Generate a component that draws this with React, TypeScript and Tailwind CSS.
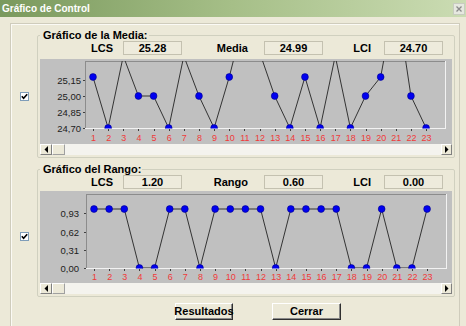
const STEP = 15.14;

const mediaY = [18, 69, -3, 37, 37, 69, -3, 37, 69, 18, -42, -7, 37, 69, 18, 69, -3, 69, 37, 18, -64, 37, 69];
const rangoV = [1, 1, 1, 0, 0, 1, 1, 0, 1, 1, 1, 1, 0, 1, 1, 1, 1, 0, 0, 1, 0, 0, 1];

type Plot = { x1: number; y1: number; x2: number; y2: number };

const Chart = ({
  id,
  height,
  plot,
  x0,
  ys,
  ticks,
  labelRight,
  xLabelY,
}: {
  id: string;
  height: number;
  plot: Plot;
  x0: number;
  ys: number[];
  ticks: { label: string; y: number }[];
  labelRight: number;
  xLabelY: number;
}) => {
  const xs = ys.map((_, i) => x0 + i * STEP);
  const pts = xs.map((x, i) => `${x},${ys[i]}`).join(" ");
  return (
    <svg width={412} height={height} className="block">
      <defs>
        <clipPath id={id}>
          <rect x={plot.x1} y={plot.y1} width={plot.x2 - plot.x1} height={plot.y2 - plot.y1 + 0.5} />
        </clipPath>
      </defs>
      {/* plot frame */}
      <line x1={plot.x1 + 0.5} y1={plot.y1 + 0.5} x2={plot.x2} y2={plot.y1 + 0.5} stroke="#8c8c8c" />
      <line x1={plot.x1 + 0.5} y1={plot.y1} x2={plot.x1 + 0.5} y2={plot.y2} stroke="#8c8c8c" />
      <line x1={plot.x2 + 0.5} y1={plot.y1} x2={plot.x2 + 0.5} y2={plot.y2 + 1} stroke="#f2f2f2" />
      <line x1={plot.x1} y1={plot.y2 + 0.5} x2={plot.x2 + 1} y2={plot.y2 + 0.5} stroke="#f2f2f2" />
      {ticks.map((t) => (
        <g key={t.label}>
          <line x1={plot.x1 - 2} y1={t.y + 0.5} x2={plot.x1} y2={t.y + 0.5} stroke="#404040" />
          <text x={labelRight} y={t.y + 3.5} textAnchor="end" fontSize="9.5" fill="#202020" fontFamily="Liberation Sans, Arial, sans-serif">
            {t.label}
          </text>
        </g>
      ))}
      {xs.map((x, i) => (
        <g key={i}>
          <line x1={Math.round(x) + 0.5} y1={plot.y2 + 1} x2={Math.round(x) + 0.5} y2={plot.y2 + 3} stroke="#404040" />
          <text x={x + 0.5} y={xLabelY + 3.5} textAnchor="middle" fontSize="9" fill="#f03a3a" fontFamily="Liberation Sans, Arial, sans-serif">
            {i + 1}
          </text>
        </g>
      ))}
      <g clipPath={`url(#${id})`}>
        <polyline points={pts} fill="none" stroke="#333" strokeWidth="1" />
        {xs.map((x, i) => (
          <circle key={i} cx={x} cy={ys[i]} r="3.4" fill="#0000f0" stroke="#00008a" strokeWidth="0.6" />
        ))}
      </g>
    </svg>
  );
};

const Arrow = ({ dir }: { dir: "l" | "r" }) => (
  <svg width="4" height="7" viewBox="0 0 4 7">
    {dir === "l" ? <polygon points="4,0 4,7 0.5,3.5" fill="#000" /> : <polygon points="0,0 0,7 3.5,3.5" fill="#000" />}
  </svg>
);

const ScrollBar = () => (
  <div className="flex h-[11px] w-[412px] bg-[#f4f3ee]">
    <div className="flex w-[12px] items-center justify-center border border-t-white border-l-white border-b-[#808080] border-r-[#808080] bg-[#ece9d8]">
      <Arrow dir="l" />
    </div>
    <div className="w-[13px] border border-t-white border-l-white border-b-[#a0a0a0] border-r-[#a0a0a0] bg-[#ece9d8]" />
    <div className="flex-1" />
    <div className="flex w-[11px] items-center justify-center border border-t-white border-l-white border-b-[#808080] border-r-[#808080] bg-[#ece9d8]">
      <Arrow dir="r" />
    </div>
  </div>
);

const Stat = ({ value }: { value: string }) => (
  <div className="flex h-[14px] w-[59px] items-center justify-center border border-[#c4c1b0] bg-[#eeebdc] text-[11px] font-bold leading-none text-black">
    {value}
  </div>
);

const StatsRow = ({ mid, a, b, c }: { mid: string; a: string; b: string; c: string }) => (
  <div className="flex h-[14px] items-center text-[11px] font-bold text-black">
    <span className="w-[83px] pr-[10px] text-right">LCS</span>
    <Stat value={a} />
    <span className="w-[82px] pr-[16px] text-right">{mid}</span>
    <Stat value={b} />
    <span className="w-[61px] pr-[13px] text-right">LCI</span>
    <Stat value={c} />
  </div>
);

const Check = () => (
  <div className="flex h-[9px] w-[9px] items-center justify-center border border-[#7f9db9] bg-white">
    <svg width="7" height="7" viewBox="0 0 7 7">
      <polyline points="0.8,3.2 2.6,5.2 6.2,1.2" fill="none" stroke="#000" strokeWidth="1.6" />
    </svg>
  </div>
);

const Button = ({ label, w }: { label: string; w: string }) => (
  <button
    type="button"
    className={`${w} flex h-[17px] items-center justify-center border border-t-white border-l-white border-b-[#303030] border-r-[#303030] bg-[#ece9d8] text-[11px] font-bold text-black shadow-[inset_-1px_-1px_0_#8a8a8a]`}
  >
    {label}
  </button>
);

export default function App() {
  return (
    <div className="flex h-[326px] w-[466px] flex-col overflow-hidden bg-[#ece9d8] font-['Liberation_Sans',Arial,sans-serif]">
      <div className="flex h-[17px] items-center justify-between bg-gradient-to-r from-[#7a995d] via-[#a6bf88] to-[#cbdcb3] pl-[2px] pr-[1px]">
        <span className="text-[10px] font-bold text-white">Gráfico de Control</span>
        <div className="flex h-[12px] w-[12px] items-center justify-center border border-[#c8ccc0] bg-[#e6e8e0]">
          <svg width="6" height="6" viewBox="0 0 6 6">
            <path d="M0.5 0.5 L5.5 5.5 M5.5 0.5 L0.5 5.5" stroke="#8a8a8a" strokeWidth="1.3" />
          </svg>
        </div>
      </div>

      <div className="flex-1 pl-[10px] pt-[6px]">
        <div className="flex h-full w-[450px] flex-col border border-b-0 border-[#cfccbc] pt-[5px] shadow-[inset_1px_1px_0_#fbfaf5]">
          <div className="flex items-start">
            <div className="flex w-[26px] justify-center pt-[63px] pl-[1px]">
              <Check />
            </div>
            <fieldset className="w-[418px] rounded-[2px] border border-[#d0d0bf] px-[2px] pb-[2px]">
              <legend className="pl-[3px] pr-[1px] text-[11px] font-bold leading-[12px] text-black">Gráfico de la Media:</legend>
              <StatsRow mid="Media" a="25.28" b="24.99" c="24.70" />
              <div className="mt-[4px] bg-[#c0c0c0]">
                <Chart
                  id="cm"
                  height={85}
                  plot={{ x1: 45, y1: 2, x2: 405, y2: 69 }}
                  x0={53}
                  ys={mediaY}
                  ticks={[
                    { label: "25,15", y: 21 },
                    { label: "25,00", y: 37 },
                    { label: "24,85", y: 53 },
                    { label: "24,70", y: 69 },
                  ]}
                  labelRight={41}
                  xLabelY={78}
                />
              </div>
              <ScrollBar />
            </fieldset>
          </div>

          <div className="mt-[5px] flex items-start">
            <div className="flex w-[26px] justify-center pt-[69px]">
              <Check />
            </div>
            <fieldset className="w-[418px] rounded-[2px] border border-[#d0d0bf] px-[2px] pb-[2px]">
              <legend className="pl-[3px] pr-[1px] text-[11px] font-bold leading-[12px] text-black">Gráfico del Rango:</legend>
              <StatsRow mid="Rango" a="1.20" b="0.60" c="0.00" />
              <div className="mt-[2px] bg-[#c0c0c0]">
                <Chart
                  id="cr"
                  height={92}
                  plot={{ x1: 46, y1: 3, x2: 406, y2: 77 }}
                  x0={54}
                  ys={rangoV.map((v) => (v ? 18 : 77))}
                  ticks={[
                    { label: "0,93", y: 22 },
                    { label: "0,62", y: 41 },
                    { label: "0,31", y: 59 },
                    { label: "0,00", y: 77 },
                  ]}
                  labelRight={39}
                  xLabelY={85}
                />
              </div>
              <ScrollBar />
            </fieldset>
          </div>

          <div className="ml-[164px] mt-[6px] flex gap-[39px]">
            <Button label="Resultados" w="w-[58px]" />
            <Button label="Cerrar" w="w-[69px]" />
          </div>
        </div>
      </div>
    </div>
  );
}
